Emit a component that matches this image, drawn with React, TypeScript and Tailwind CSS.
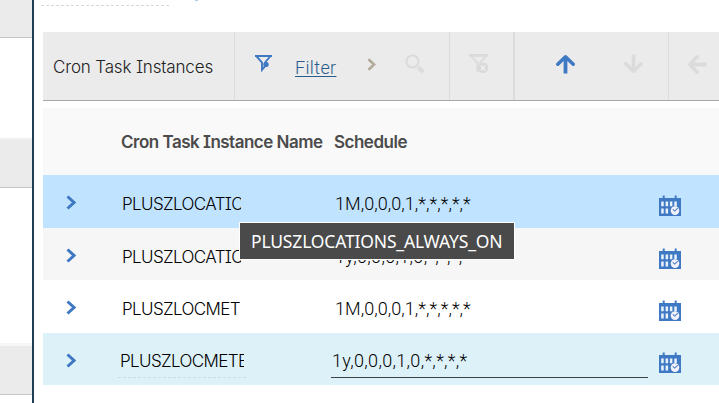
import React from "react";

type Row = {
  name: string;
  schedule: string;
  row: string;
  tracking: string;
  editing?: boolean;
};

const rows: Row[] = [
  { name: "PLUSZLOCATIO", schedule: "1M,0,0,0,1,*,*,*,*,*", row: "h-[53px] bg-[#c0e4ff]", tracking: "tracking-[0.05px]" },
  { name: "PLUSZLOCATIO", schedule: "1y,0,0,0,1,0,*,*,*,*", row: "h-[52px] bg-[#f6f6f6]", tracking: "tracking-[0.32px]" },
  { name: "PLUSZLOCMET", schedule: "1M,0,0,0,1,*,*,*,*,*", row: "h-[53px] bg-white", tracking: "tracking-[0.05px]" },
  { name: "PLUSZLOCMETE", schedule: "1y,0,0,0,1,0,*,*,*,*", row: "h-[52px] bg-[#ddf1f8]", tracking: "tracking-[0.32px]", editing: true },
];

const nameFont = "font-['Inter',sans-serif] text-[17px] [font-feature-settings:'cv08']";

function CalendarIcon() {
  return (
    <svg width="24" height="22" viewBox="0 0 24 22" className="shrink-0">
      <path d="M1 3h3.7V0.5h2V3h10V0.5h2V3H23v18H1z" fill="#3f78c3" />
      <path d="M3.2 6.5h2.5v4.8H3.2zM7.6 6.5h2.5v4.8H7.6zM11.9 6.5h2.5v4.8h-2.5zM16.3 6.5h2.5v4.8h-2.5zM3.2 13.5h2.5v5H3.2zM7.6 13.5h2.5v5H7.6z" fill="#e9f3ff" />
      <circle cx="17" cy="15.6" r="4.3" fill="#f1f2fb" />
      <path d="M14.8 14.3l2 1.8 2.9-3" stroke="#4d7fc4" strokeWidth="1.1" fill="none" />
    </svg>
  );
}

function Chevron({ className }: { className: string }) {
  return (
    <svg viewBox="0 0 10 15" fill="none" stroke="currentColor" className={className}>
      <path d="M1.5 1.5L8 7.5l-6.5 6" strokeWidth="3" />
    </svg>
  );
}

function Arrow({ className }: { className: string }) {
  return (
    <svg width="20" height="20" viewBox="0 0 20 20" fill="none" stroke="currentColor" className={className}>
      <path d="M9.5 19.5V3" strokeWidth="3.8" />
      <path d="M1.8 10.2L9.5 2.8l7.7 7.4" strokeWidth="3.5" strokeLinecap="round" strokeLinejoin="round" />
    </svg>
  );
}

function Sidebar() {
  return (
    <div className="flex w-8 shrink-0 flex-col">
      <div className="h-[38px] border-b border-[#c6c6c6] bg-[#ebebeb]" />
      <div className="h-[99px]" />
      <div className="h-[51px] border-t-2 border-b border-t-[#f7f7f7] border-b-[#c6c6c6] bg-[#ebebeb]" />
      <div className="h-[155px]" />
      <div className="h-[52px] border-t-[3px] border-b border-t-[#f7f7f7] border-b-[#c6c6c6] bg-[#ebebeb]" />
    </div>
  );
}

function Toolbar() {
  return (
    <div className="flex h-[69px] border-b border-[#a8a8a8] bg-[#ebebeb]">
      <div className="flex w-[192px] shrink-0 items-center border-r border-[#dcdcdc] pl-[10px]">
        <h2 className={`${nameFont} pt-[3px] font-light tracking-[-0.16px] text-[#222]`}>Cron Task Instances</h2>
      </div>
      <div className="flex w-[215px] shrink-0 items-start border-r border-[#dcdcdc] pl-5">
        <svg width="17" height="18" viewBox="0 0 17 18" fill="none" className="mt-[22px] shrink-0">
          <path d="M1.3 2h14.3L10 8.5v3.8L7 15.8V8.5z" stroke="#3f78c3" strokeWidth="1.9" />
          <path d="M0 1h17v2H0z" fill="#3f78c3" />
          <circle cx="11" cy="10.4" r="2.7" fill="#3f78c3" />
        </svg>
        <a className="mt-[23px] ml-[23px] w-[42px] shrink-0 font-['Roboto',sans-serif] text-[18px] leading-[26px] font-light tracking-[0.35px] text-[#275c8c] underline decoration-[1px] underline-offset-2">Filter</a>
        <Chevron className="mt-[26px] ml-[30px] h-[13px] w-[9px] text-[#b1aa9b]" />
        <svg width="20" height="20" viewBox="0 0 20 20" fill="none" stroke="#dbdbdb" className="mt-[22px] ml-[29px]">
          <circle cx="7.5" cy="7.5" r="6" strokeWidth="2.2" />
          <path d="M13 13l5 5" strokeWidth="4" />
        </svg>
      </div>
      <div className="flex w-[65px] shrink-0 items-start border-r-2 border-[#dcdcdc] pt-[22px] pl-[19px]">
        <svg width="20" height="20" viewBox="0 0 20 20" fill="none">
          <path d="M1.6 1.5h16l-6.4 7v5.2L8.4 17V8.8z" stroke="#dadada" strokeWidth="1.8" />
          <path d="M0 0h19v2.4H0z" fill="#dadada" />
          <circle cx="14" cy="13.8" r="5.4" fill="#dadada" />
          <path d="M11.9 11.7l4.2 4.2m0-4.2l-4.2 4.2" stroke="#efefef" strokeWidth="1.5" />
        </svg>
      </div>
      <div className="flex w-[154px] shrink-0 items-start gap-12 border-r border-[#dcdcdc] pt-[22px] pl-[41px]">
        <Arrow className="text-[#3f78c3]" />
        <Arrow className="-scale-y-100 text-[#dbdbdb]" />
      </div>
      <div className="flex items-start pt-[22px] pl-[18px]">
        <Arrow className="-rotate-90 text-[#dbdbdb]" />
      </div>
    </div>
  );
}

function TaskRow({ name, schedule, row, tracking, editing }: Row) {
  return (
    <div className={`flex shrink-0 items-start pl-[23px] ${row}`}>
      <Chevron className="mt-5 h-[15px] w-[10px] shrink-0 text-[#3f78c3]" />
      {editing ? (
        <>
          <div className={`${nameFont} mt-[13px] ml-[42px] h-8 w-32 shrink-0 border-b border-dashed border-[#cfdbe0] pl-0.5`}>
            <div className="w-[124px] overflow-hidden leading-[30px] font-light tracking-[-0.62px] whitespace-nowrap text-black">{name}</div>
          </div>
          <div className={`mt-[13px] ml-[85px] h-8 w-[317px] shrink-0 border-b border-[#3b4347] pl-px font-['Roboto',sans-serif] text-[18px] leading-[30px] font-light text-black ${tracking}`}>{schedule}</div>
          <div className="mt-[19px] ml-[10px]"><CalendarIcon /></div>
        </>
      ) : (
        <>
          <div className={`${nameFont} mt-[14px] ml-[46px] w-[119px] shrink-0 overflow-hidden leading-[30px] font-light tracking-[-0.62px] whitespace-nowrap text-black`}>{name}</div>
          <div className={`mt-[14px] ml-[94px] w-[312px] shrink-0 font-['Roboto',sans-serif] text-[18px] leading-[30px] font-light text-black ${tracking}`}>{schedule}</div>
          <div className="mt-5 ml-[11px]"><CalendarIcon /></div>
        </>
      )}
    </div>
  );
}

export default function App() {
  return (
    <div className="relative flex h-[403px] w-[719px] overflow-hidden bg-white">
      <Sidebar />
      <main className="flex min-w-0 flex-1 flex-col border-l-2 border-[#203f55] pl-[9px]">
        <div className="-ml-0.5 flex h-8 items-start">
          <div className="h-[6px] w-32 border-b border-dashed border-[#d8d8d8]" />
          <div className="ml-[26px] h-px w-[3px] bg-[#a9cdea]" />
        </div>
        <Toolbar />
        <div className="mt-[7px] flex h-[67px] shrink-0 items-center bg-[#f9f9f9] pt-[3px] pl-[78px] font-['Inter',sans-serif] text-[17px] font-semibold tracking-[-0.5px] text-[#4b4b4b] [font-feature-settings:'cv08']">
          <span className="w-[213px] whitespace-nowrap">Cron Task Instance Name</span>
          <span>Schedule</span>
        </div>
        {rows.map((r, i) => (
          <TaskRow key={i} {...r} />
        ))}
      </main>
      <div className="absolute top-[222px] left-[239px] flex h-[38px] w-[276px] items-center border border-white bg-[#4a4a4a] pt-px pl-[11px] font-['Noto_Sans',sans-serif] text-[17.5px] tracking-[-0.17px] text-white">
        PLUSZLOCATIONS_ALWAYS_ON
      </div>
    </div>
  );
}
